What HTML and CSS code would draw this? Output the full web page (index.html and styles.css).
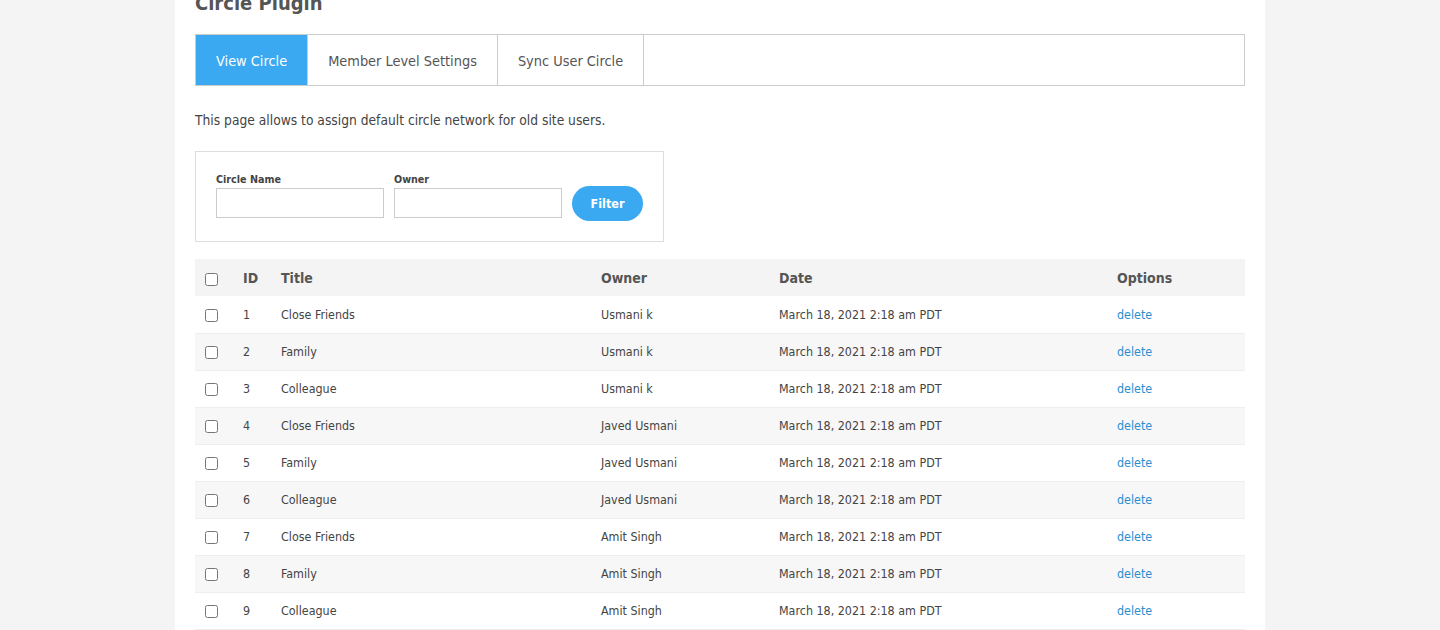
FILE: index.html
```html
<!DOCTYPE html>
<html>
<head>
<meta charset="utf-8">
<link rel="stylesheet" href="styles.css">
</head>
<body>
<div class="panel">
  <h1 class="title">Circle Plugin</h1>
  <div class="tabs">
    <a class="tab active">View Circle</a>
    <a class="tab">Member Level Settings</a>
    <a class="tab">Sync User Circle</a>
  </div>
  <p class="desc">This page allows to assign default circle network for old site users.</p>
  <div class="filter">
    <div class="field">
      <label>Circle Name</label>
      <input type="text">
    </div>
    <div class="field">
      <label>Owner</label>
      <input type="text">
    </div>
    <button class="btn">Filter</button>
  </div>
  <table class="grid">
    <colgroup>
      <col class="c-check"><col class="c-id"><col class="c-title"><col class="c-owner"><col class="c-date"><col class="c-opt">
    </colgroup>
    <thead>
      <tr><th><input type="checkbox"></th><th>ID</th><th>Title</th><th>Owner</th><th>Date</th><th>Options</th></tr>
    </thead>
    <tbody>
      <tr><td><input type="checkbox"></td><td>1</td><td>Close Friends</td><td>Usmani k</td><td>March 18, 2021 2:18 am PDT</td><td><a class="link">delete</a></td></tr>
      <tr><td><input type="checkbox"></td><td>2</td><td>Family</td><td>Usmani k</td><td>March 18, 2021 2:18 am PDT</td><td><a class="link">delete</a></td></tr>
      <tr><td><input type="checkbox"></td><td>3</td><td>Colleague</td><td>Usmani k</td><td>March 18, 2021 2:18 am PDT</td><td><a class="link">delete</a></td></tr>
      <tr><td><input type="checkbox"></td><td>4</td><td>Close Friends</td><td>Javed Usmani</td><td>March 18, 2021 2:18 am PDT</td><td><a class="link">delete</a></td></tr>
      <tr><td><input type="checkbox"></td><td>5</td><td>Family</td><td>Javed Usmani</td><td>March 18, 2021 2:18 am PDT</td><td><a class="link">delete</a></td></tr>
      <tr><td><input type="checkbox"></td><td>6</td><td>Colleague</td><td>Javed Usmani</td><td>March 18, 2021 2:18 am PDT</td><td><a class="link">delete</a></td></tr>
      <tr><td><input type="checkbox"></td><td>7</td><td>Close Friends</td><td>Amit Singh</td><td>March 18, 2021 2:18 am PDT</td><td><a class="link">delete</a></td></tr>
      <tr><td><input type="checkbox"></td><td>8</td><td>Family</td><td>Amit Singh</td><td>March 18, 2021 2:18 am PDT</td><td><a class="link">delete</a></td></tr>
      <tr><td><input type="checkbox"></td><td>9</td><td>Colleague</td><td>Amit Singh</td><td>March 18, 2021 2:18 am PDT</td><td><a class="link">delete</a></td></tr>
    </tbody>
  </table>
</div>
</body>
</html>
```
FILE: styles.css
```css
* { box-sizing: border-box; }
html, body { margin: 0; padding: 0; }
body {
  background: #f4f4f4;
  font-family: "DejaVu Sans Condensed", "DejaVu Sans", sans-serif;
  color: #444;
  overflow: hidden;
}
.panel {
  width: 1090px;
  margin: 0 0 0 175px;
  background: #fff;
  padding: 0 20px 40px;
}
.title {
  margin: -10px 0 0;
  font-size: 20px;
  line-height: 26px;
  font-weight: bold;
  color: #555;
  font-family: "DejaVu Sans Condensed", "DejaVu Sans", sans-serif;
}
.tabs {
  margin-top: 18px;
  display: flex;
  border: 1px solid #ccc;
  height: 52px;
}
.tab {
  display: flex;
  align-items: center;
  padding: 1px 20px 0;
  font-size: 14.4px;
  color: #555;
  border-right: 1px solid #ccc;
}
.tab.active {
  background: #3aa9f2;
  color: #fff;
}
.desc {
  margin: 25px 0 0;
  font-size: 13.7px;
  line-height: 18px;
  color: #444;
}
.filter {
  margin-top: 22px;
  width: 469px;
  height: 91px;
  border: 1px solid #ddd;
  display: flex;
  align-items: flex-end;
  gap: 10px;
  padding: 0 20px 23px;
}
.field {
  display: flex;
  flex-direction: column;
}
.field label {
  font-size: 9.6px;
  font-weight: bold;
  color: #444;
  font-family: "DejaVu Sans", sans-serif;
  line-height: 14px;
  margin-bottom: 1px;
}
.field input {
  width: 168px;
  height: 30px;
  border: 1px solid #ccc;
  margin: 0;
  padding: 0 6px;
}
.btn {
  width: 71px;
  height: 35px;
  border: 0;
  border-radius: 18px;
  background: #3aa9f2;
  color: #fff;
  font-weight: bold;
  font-size: 12.5px;
  font-family: "DejaVu Sans Condensed", "DejaVu Sans", sans-serif;
  margin-bottom: -3px;
  padding: 0;
}
.grid {
  margin-top: 17px;
  width: 1050px;
  border-collapse: collapse;
  table-layout: fixed;
}
.c-check { width: 38px; }
.c-id { width: 38px; }
.c-title { width: 320px; }
.c-owner { width: 178px; }
.c-date { width: 338px; }
.c-opt { width: 138px; }
.grid th {
  background: #f4f4f4;
  height: 37px;
  text-align: left;
  padding: 1px 0 0 10px;
  font-size: 14px;
  font-weight: bold;
  color: #555;
}
.grid td {
  height: 37px;
  padding: 0 0 0 10px;
  font-size: 12.4px;
  color: #444;
  border-bottom: 1px solid #eee;
}
.grid tbody tr:nth-child(even) td { background: #f7f7f7; }
.grid input[type=checkbox] {
  margin: 0;
  width: 13px;
  height: 13px;
  vertical-align: middle;
}
.link { color: #2a8fd0; }
```
